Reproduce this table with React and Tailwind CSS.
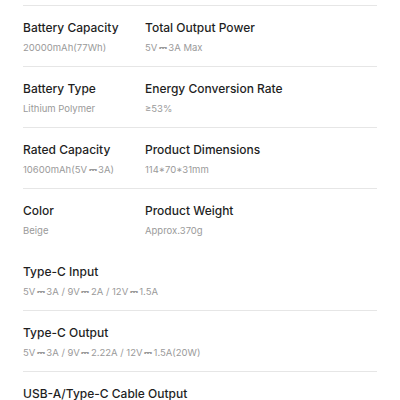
import React from "react";

const pairs = [
  [
    { label: "Battery Capacity", value: "20000mAh(77Wh)" },
    { label: "Total Output Power", value: "5V⎓3A Max" },
  ],
  [
    { label: "Battery Type", value: "Lithium Polymer" },
    { label: "Energy Conversion Rate", value: "≥53%" },
  ],
  [
    { label: "Rated Capacity", value: "10600mAh(5V⎓3A)" },
    { label: "Product Dimensions", value: "114*70*31mm" },
  ],
  [
    { label: "Color", value: "Beige" },
    { label: "Product Weight", value: "Approx.370g" },
  ],
];

const singles = [
  { label: "Type-C Input", value: "5V⎓3A / 9V⎓2A / 12V⎓1.5A" },
  { label: "Type-C Output", value: "5V⎓3A / 9V⎓2.22A / 12V⎓1.5A(20W)" },
  { label: "USB-A/Type-C Cable Output", value: "5V⎓3A / 9V⎓2.22A / 12V⎓1.5A(20W)" },
];

// the DC symbol is wider in the original font
function Value({ text }) {
  const parts = text.split("⎓");
  return parts.map((p, i) => (
    <React.Fragment key={i}>
      {i > 0 && (
        <span className="mx-[1.5px]" style={{ fontFamily: "'DejaVu Sans', sans-serif" }}>
          ⎓
        </span>
      )}
      {p.replace(/ \/ /g, "\u00a0/\u00a0")}
    </React.Fragment>
  ));
}

function Spec({ label, value }) {
  return (
    <div>
      <h4 className="text-[12px] leading-4 font-medium text-[#1f1f1f]">{label}</h4>
      <p className="mt-[5px] text-[9.5px] leading-[14px] text-[#9a9a9a] whitespace-nowrap">
        <Value text={value} />
      </p>
    </div>
  );
}

export default function App() {
  return (
    <div
      className="w-[400px] h-[400px] overflow-hidden bg-white pt-[5px] px-[23px]"
      style={{ fontFamily: "Inter, 'DejaVu Sans', sans-serif" }}
    >
      <div className="w-[354px] border-t border-[#e6e6e6]">
        {pairs.map((row, i) => (
          <div
            key={i}
            className={`grid grid-cols-[122px_1fr] pt-[14px] pb-[11px] border-b ${
              i === pairs.length - 1 ? "border-transparent" : "border-[#e6e6e6]"
            }`}
          >
            <Spec {...row[0]} />
            <Spec {...row[1]} />
          </div>
        ))}
        {singles.map((s) => (
          <div key={s.label} className="pt-[14px] pb-[11px] border-b border-[#e6e6e6]">
            <Spec {...s} />
          </div>
        ))}
      </div>
    </div>
  );
}
